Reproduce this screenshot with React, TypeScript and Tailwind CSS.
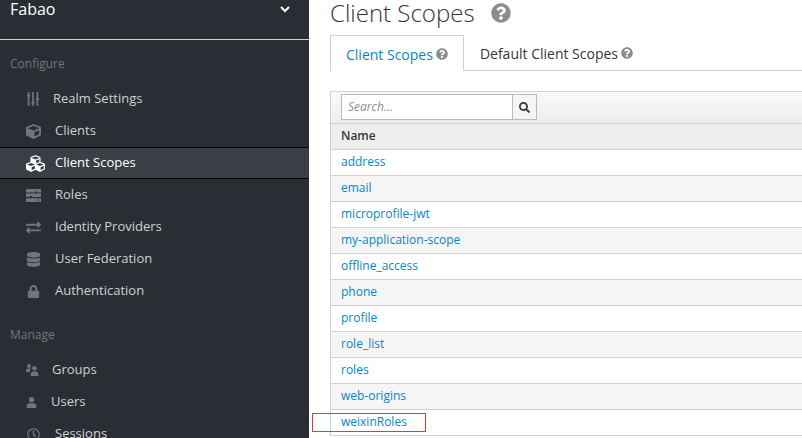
import { FaCube, FaCubes, FaDatabase, FaExchangeAlt, FaLock, FaQuestionCircle, FaRegClock, FaSearch, FaSlidersH, FaUser } from 'react-icons/fa';
import type { ReactNode } from 'react';

function RolesIcon() {
  return (
    <svg width="15" height="13" viewBox="0 0 15 13" fill="currentColor">
      <path d="M0 0h15v3.4H11v-1H9v1H0zM0 4.600h15V8H6V7H4v1H0zM0 9.300h15V13H0zM11 10.400v1h2v-1z" />
    </svg>
  );
}

function GroupsIcon() {
  return (
    <svg width="13" height="12" viewBox="0 0 13 12" fill="currentColor">
      <circle cx="3" cy="2" r="1.9" />
      <path d="M0 8V6.200C0 5 1 4.500 3 4.500c.8 0 1.400.1 1.900.3C4.300 5.500 3.900 6.500 3.800 8z" />
      <circle cx="8.500" cy="4.300" r="2.300" />
      <path d="M4.800 12V10c0-1.800 1.500-2.800 3.700-2.800s3.900 1 3.900 2.800v2z" />
    </svg>
  );
}

function NavItem({ icon, label, iconBox, gap, active }: { icon: ReactNode; label: string; iconBox: string; gap: string; active?: boolean }) {
  return (
    <div className={`flex h-8 items-center pl-[26px] text-[13px] ${active ? 'border-y border-black bg-[#393f44] text-white' : 'text-[#d1d1d1]'}`}>
      <span className={`flex shrink-0 items-center justify-center ${iconBox} ${active ? 'text-white' : 'text-[#72767b]'}`}>{icon}</span>
      <span className={gap}>{label}</span>
    </div>
  );
}

const scopes = ['address', 'email', 'microprofile-jwt', 'my-application-scope', 'offline_access', 'phone', 'profile', 'role_list', 'roles', 'web-origins', 'weixinRoles'];

export default function App() {
  return (
    <div className="relative flex h-[438px] w-[802px] overflow-hidden bg-white font-['Open_Sans',sans-serif] text-[12px] text-[#363636]">
      {/* Sidebar */}
      <aside className="h-full w-[309px] shrink-0 overflow-hidden bg-[#292e34]">
        <div className="flex h-[40px] items-start justify-between border-b border-[#d1d1d1] pl-[10px] pr-[19px]">
          <span className="text-[16px] leading-[18px] text-white">Fabao</span>
          <svg className="mt-[6px]" width="10" height="7" viewBox="0 0 10 7" fill="none" stroke="#ffffff" strokeWidth="2">
            <path d="M1 1l4 4 4-4" />
          </svg>
        </div>

        <div className="mt-[15px] h-[18px] pl-[10px] text-[12px] leading-[18px] text-[#72767b]">Configure</div>
        <div className="mt-[10px]">
          <NavItem label="Realm Settings" iconBox="w-[14px]" gap="ml-[13px]" icon={<FaSlidersH className="rotate-90" size={14} />} />
          <NavItem label="Clients" iconBox="w-[15px]" gap="ml-[14px]" icon={<FaCube size={15} />} />
          <NavItem active label="Client Scopes" iconBox="w-[19px]" gap="ml-[10px]" icon={<FaCubes size={19} />} />
          <NavItem label="Roles" iconBox="w-[15px]" gap="ml-[14px]" icon={<RolesIcon />} />
          <NavItem label="Identity Providers" iconBox="w-[15px]" gap="ml-[14px]" icon={<FaExchangeAlt size={15} />} />
          <NavItem label="User Federation" iconBox="w-[15px]" gap="ml-[14px]" icon={<FaDatabase size={15} />} />
          <NavItem label="Authentication" iconBox="w-[15px]" gap="ml-[14px]" icon={<FaLock size={13} />} />
        </div>

        <div className="mt-[19px] h-[18px] pl-[10px] text-[12px] leading-[18px] text-[#72767b]">Manage</div>
        <div className="mt-[10px]">
          <NavItem label="Groups" iconBox="w-[13px]" gap="ml-[13px]" icon={<GroupsIcon />} />
          <NavItem label="Users" iconBox="w-[11px]" gap="ml-[14px]" icon={<FaUser size={11} />} />
          <NavItem label="Sessions" iconBox="w-[15px]" gap="ml-[14px]" icon={<FaRegClock size={13} />} />
        </div>
      </aside>

      {/* Main content */}
      <main className="min-w-0 flex-1 pl-[21px]">
        <div className="flex h-[35px] items-start">
          <h1 className="-mt-[1px] text-[24px] font-light leading-[28px] text-[#363636]">Client Scopes</h1>
          <FaQuestionCircle className="ml-[16px] mt-[3px] text-[#8b8d8f]" size={20} />
        </div>

        <div className="flex h-[36px] border-b border-[#d1d1d1] text-[14px]">
          <div className="-mb-px flex h-[36px] items-center border-x border-t border-[#d1d1d1] bg-white px-[15px] pt-[1px] text-[#0088ce]">
            Client Scopes
            <FaQuestionCircle className="ml-[3px] text-[#8b8d8f]" size={12} />
          </div>
          <div className="flex items-center pl-[16px] pt-[1px] text-[#363636]">
            Default Client Scopes
            <FaQuestionCircle className="ml-[3px] text-[#8b8d8f]" size={12} />
          </div>
        </div>

        <div className="mt-[20px] w-[600px] border-l border-[#d1d1d1]">
          <div className="flex h-[33px] items-start border-y border-[#d1d1d1] bg-gradient-to-b from-[#fafafa] to-[#ededed] pl-[10px] pt-[2px]">
            <div className="flex h-[26px] w-[196px] border border-[#bbbbbb] bg-white">
              <span className="flex-1 pl-[6px] text-[12px] italic leading-[24px] text-[#8b8d8f]">Search...</span>
              <span className="flex w-[24px] items-center justify-center border-l border-[#bbbbbb] bg-[#f5f5f5] text-[#363636]">
                <FaSearch size={11} />
              </span>
            </div>
          </div>
          <div className="flex h-[26px] items-center border-b border-[#d1d1d1] bg-[#eeeeee] pb-[2px] pl-[10px] font-semibold">Name</div>
          {scopes.map((name, i) => (
            <div key={name} className={`flex h-[26px] items-center border-b border-[#d1d1d1] pb-[2px] pl-[10px] text-[#0088ce] ${i % 2 === 0 ? 'bg-white' : 'bg-[#f5f5f5]'}`}>
              {name}
            </div>
          ))}
        </div>
      </main>

      {/* Red annotation box */}
      <div className="absolute left-[312px] top-[413px] h-[19px] w-[114px] border border-[#e53935]" />
    </div>
  );
}
